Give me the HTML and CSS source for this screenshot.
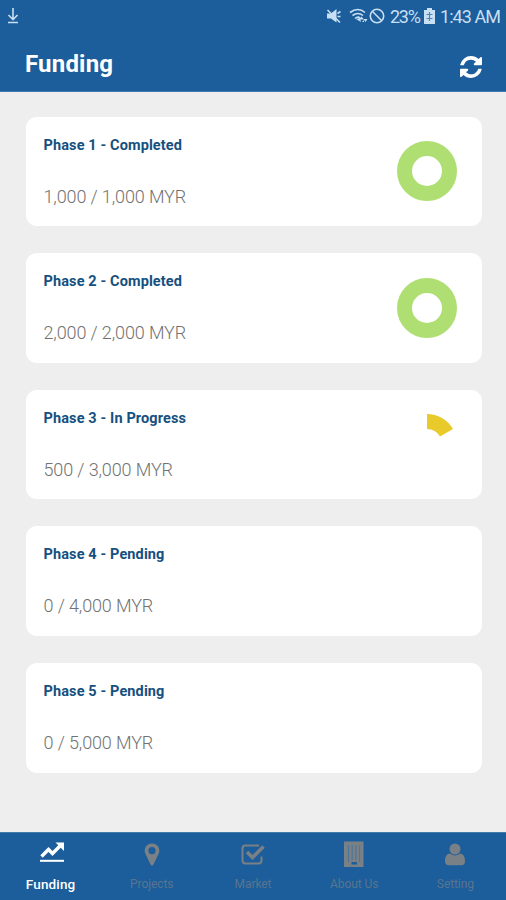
FILE: index.html
```html
<!DOCTYPE html>
<html lang="en">
<head>
<meta charset="utf-8">
<title>Funding</title>
<link rel="stylesheet" href="styles.css">
</head>
<body>
<div class="app">
  <header class="header">
    <div class="status">
      <svg class="download" width="12" height="16" viewBox="0 0 12 16"><path d="M6 0v11M1.500 7l4.500 4.500L10.500 7M1 14.500h10"/></svg>
      <svg class="mute" width="16" height="16" viewBox="0 0 16 16"><path class="solid" d="M1 5.500h4l5.500-4.500v13.500L5 10.500H1z"/><path d="M1.500 2l12.500 12.500M11.500 5.500l3-2M11.500 8.500h3"/></svg>
      <svg class="wifi" width="19" height="16" viewBox="0 0 19 16"><path d="M1 4.500Q9 -1.500 16 4.500M3.500 7.500Q9 3.500 14 7.500M6 10.500Q9 8 11 10"/><path class="solid" d="M7 11l4-1 1 4zM12.500 8.500l2.500 3h-5zM16.500 14l-2-3h4zM13 14l2-2v2z"/></svg>
      <svg class="block" width="16" height="16" viewBox="0 0 16 16"><circle cx="8" cy="8" r="6.700"/><path d="M3.300 3.300l9.400 9.400"/></svg>
      <span class="percent">23%</span>
      <svg class="battery" width="11" height="16" viewBox="0 0 11 16"><path class="solid" d="M3 0h5v2h3v14H0V2h3z"/><path class="cut" d="M5.500 4v9M2.500 6.500h6M2.500 10.500h6"/></svg>
      <span class="clock">1:43 AM</span>
    </div>
    <div class="titlebar">
      <h1 class="title">Funding</h1>
      <svg class="refresh" width="22" height="22" viewBox="0 0 1536 1536"><path d="M1511 928q0 5-1 7-64 268-268 434.500t-478 166.500q-146 0-282.500-55t-243.500-157l-129 129q-19 19-45 19t-45-19-19-45v-448q0-26 19-45t45-19h448q26 0 45 19t19 45-19 45l-137 137q71 66 161 102t187 36q134 0 250-65t186-179q11-17 53-117 8-23 30-23h192q13 0 22.500 9.500t9.500 22.500zm25-800v448q0 26-19 45t-45 19h-448q-26 0-45-19t-19-45 19-45l138-138q-148-137-349-137-134 0-250 65t-186 179q-11 17-53 117-8 23-30 23h-199q-13 0-22.500-9.500t-9.500-22.500v-7q65-268 270-434.500t480-166.500q146 0 284 55.500t245 156.500l130-129q19-19 45-19t45 19 19 45z"/></svg>
    </div>
  </header>

  <main class="phases">
    <section class="card">
      <div><h2 class="phase">Phase 1 - Completed</h2><p class="amount">1,000 / 1,000 MYR</p></div>
      <svg class="chart" width="60" height="60" viewBox="0 0 60 60"><circle class="done" cx="30" cy="30" r="22.500"/></svg>
    </section>
    <section class="card">
      <div><h2 class="phase">Phase 2 - Completed</h2><p class="amount">2,000 / 2,000 MYR</p></div>
      <svg class="chart" width="60" height="60" viewBox="0 0 60 60"><circle class="done" cx="30" cy="30" r="22.500"/></svg>
    </section>
    <section class="card">
      <div><h2 class="phase">Phase 3 - In Progress</h2><p class="amount">500 / 3,000 MYR</p></div>
      <svg class="chart" width="60" height="60" viewBox="0 0 60 60"><path class="part" d="M30 0A30 30 0 0 1 55.980 15L42.990 22.500A15 15 0 0 0 30 15z"/></svg>
    </section>
    <section class="card">
      <div><h2 class="phase">Phase 4 - Pending</h2><p class="amount">0 / 4,000 MYR</p></div>
    </section>
    <section class="card">
      <div><h2 class="phase">Phase 5 - Pending</h2><p class="amount">0 / 5,000 MYR</p></div>
    </section>
  </main>

  <nav class="tabs">
    <a class="tab active">
      <svg width="26" height="26" viewBox="0 0 26 26"><path class="line" d="M2.500 15.500l7-7 4 4 8-8"/><path d="M16.500 1.500H25V10z"/><path d="M1 18.800h24v2H1z"/></svg>
      <span>Funding</span>
    </a>
    <a class="tab">
      <svg width="26" height="26" viewBox="0 0 26 26"><path fill-rule="evenodd" d="M13 2.500c4.200 0 7.300 3.100 7.300 7.200 0 1.300-.3 2.200-.6 2.800l-5.200 11c-.6 1.300-2.400 1.300-3 0l-5.200-11c-.3-.6-.6-1.500-.6-2.800 0-4.100 3.100-7.200 7.300-7.200zm0 3.600a3.600 3.600 0 1 0 0 7.200 3.600 3.600 0 0 0 0-7.200z"/></svg>
      <span>Projects</span>
    </a>
    <a class="tab">
      <svg width="26" height="26" viewBox="0 0 26 26"><path class="box" d="M19 4.500H5.500q-3 0-3 3v12q0 3 3 3h13q3 0 3-3v-4"/><path class="check" d="M7 11l5.500 5.500L23.500 5.500"/></svg>
      <span>Market</span>
    </a>
    <a class="tab">
      <svg width="26" height="26" viewBox="0 0 26 26"><path d="M3 .5h19.500v25.500H3z"/><path class="windows" d="M7.500 4v17M11.200 4v15M14.900 4v15M18.600 4v17"/><path class="door" d="M10.500 21h5.500v2.500h-5.500z"/></svg>
      <span>About Us</span>
    </a>
    <a class="tab">
      <svg width="26" height="26" viewBox="0 0 26 26"><circle cx="13" cy="8" r="5.500"/><path d="M8 12.500q5 4 10 0c3.500.2 5 3.500 5 7.500 0 3-1.500 4.200-3.500 4.200h-13C4.500 24.200 3 23 3 20c0-4 1.500-7.300 5-7.500z"/></svg>
      <span>Setting</span>
    </a>
  </nav>
</div>
</body>
</html>
```
FILE: styles.css
```css
* { box-sizing: border-box; }
body {
  margin: 0;
  background: #eeeeee;
  font-family: Roboto, "Liberation Sans", sans-serif;
}
.app {
  height: 900px;
  display: flex;
  flex-direction: column;
  overflow: hidden;
}
.header {
  height: 92px;
  flex: none;
  background: #1b5e9b;
  border-bottom: 1px solid #427aab;
  color: #fff;
}
.status {
  height: 32px;
  padding: 0 6px 0 7px;
  display: flex;
  align-items: center;
  color: #c9dff4;
  font-size: 18px;
  white-space: nowrap;
}
.status svg {
  flex: none;
  fill: none;
  stroke: #c9dff4;
  stroke-width: 1.6;
}
.status .solid { fill: #c9dff4; stroke: none; }
.status .cut { stroke: #5584b3; stroke-width: 1.2; }
.mute { margin-left: auto; }
.wifi { margin-left: 7px; }
.block { margin-left: 1px; }
.percent { margin-left: 5px; width: 30px; letter-spacing: -1.300px; }
.battery { margin-left: 4px; }
.clock { margin-left: 5px; width: 60px; letter-spacing: -.950px; }
.titlebar {
  height: 59px;
  padding: 0 24px 0 25px;
  display: flex;
  align-items: center;
  justify-content: space-between;
}
.title {
  margin: 4px 0 0;
  font-size: 24px;
  line-height: 28px;
  font-weight: 700;
  letter-spacing: .2px;
}
.refresh { fill: #fff; margin-top: 11px; }
.phases {
  flex: 1;
  padding: 24.700px 24.500px 0 25.500px;
  display: flex;
  flex-direction: column;
  gap: 27.100px;
}
.card {
  height: 109.500px;
  flex: none;
  padding: 19px 25px 0 18px;
  border-radius: 11px;
  background: #fff;
  display: flex;
  justify-content: space-between;
}
.phase {
  margin: 0;
  color: #16507f;
  font-size: 14.500px;
  line-height: 20px;
  font-weight: 700;
  letter-spacing: .120px;
}
.amount {
  margin: 29px 0 0;
  color: #727272;
  font-size: 18px;
  line-height: 24px;
  font-weight: 300;
  letter-spacing: -.120px;
}
.chart { margin-top: 5.500px; }
.done { fill: none; stroke: #afdf72; stroke-width: 15; }
.part { fill: #e8ca2a; }
.tabs {
  height: 68.500px;
  flex: none;
  background: #1b5e9b;
  border-top: 1px solid #427aab;
  display: grid;
  grid-template-columns: repeat(5, 1fr);
}
.tab {
  padding-top: 8px;
  display: flex;
  flex-direction: column;
  align-items: center;
  color: #5a7490;
  fill: #798086;
  font-size: 12px;
  line-height: 16px;
}
.tab span { margin-top: 9.500px; letter-spacing: -.080px; }
.tab.active { color: #fff; fill: #fff; font-size: 13.500px; font-weight: 500; }
.tab.active span { margin-top: 9px; letter-spacing: .150px; }
.tab.active svg { margin-left: 2px; }
.line { fill: none; stroke: #fff; stroke-width: 3.4; }
.box { fill: none; stroke: #798086; stroke-width: 2; }
.check { fill: none; stroke: #798086; stroke-width: 3.6; }
.windows { stroke: #4e7498; stroke-width: 1.1; }
.door { fill: #1b5e9b; }
```
